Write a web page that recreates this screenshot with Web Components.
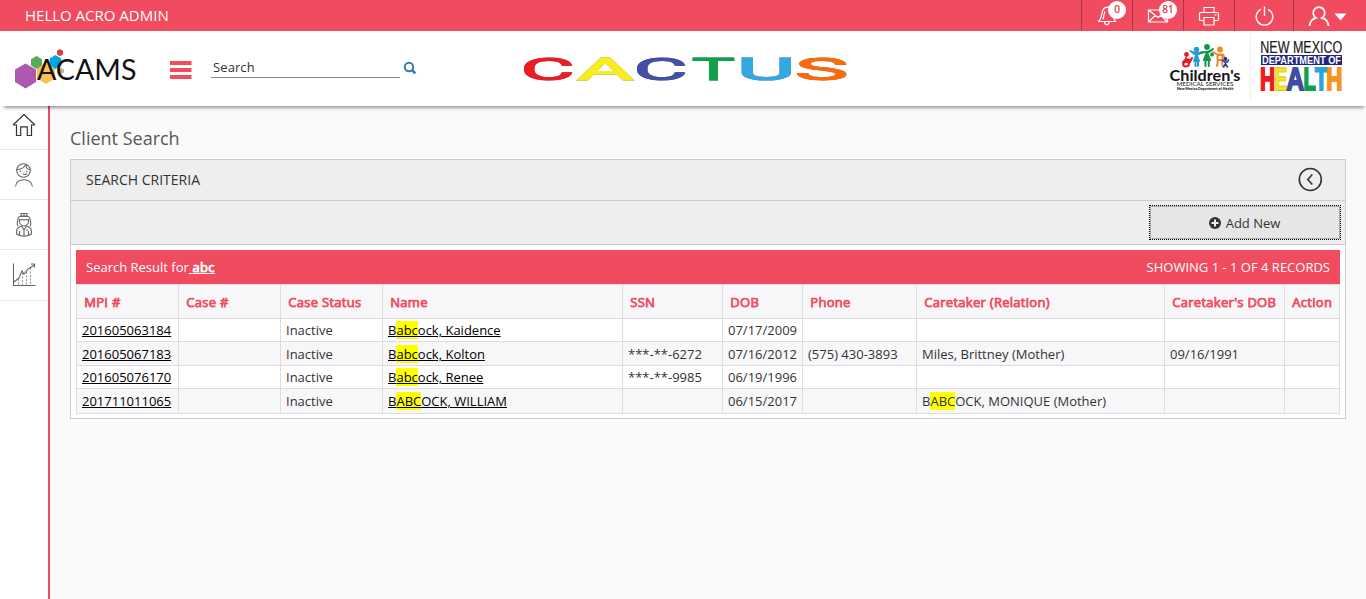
<!DOCTYPE html>
<html lang="en">
<head>
<meta charset="utf-8">
<title>Client Search</title>
<style>
html,body{margin:0;height:100%;overflow:hidden;background:#fafafa;font-family:"Open Sans",sans-serif;font-size:13px;color:#333}
</style>
</head>
<body>
<cactus-app></cactus-app>
<script>
function define(name, html) {
  const t = document.createElement('template');
  t.innerHTML = '<style>*{box-sizing:border-box}svg{display:block;flex:none;overflow:visible}</style>' + html;
  customElements.define(name, class extends HTMLElement {
    constructor() {
      super();
      this.attachShadow({mode: 'open'}).appendChild(t.content.cloneNode(true));
    }
  });
}

define('top-action', `
<style>
:host{display:flex;align-items:center;justify-content:center;box-sizing:border-box;height:31px;width:51px;border-left:1px solid #ae3541;position:relative;color:#fff}
::slotted(svg){display:block;fill:none;stroke:#fff;stroke-width:1.2}
::slotted(b){position:absolute;top:1px;left:26px;width:18px;height:18px;border-radius:9px;background:#fff;color:#e8202c;font:400 10px/17px "Open Sans",sans-serif;text-align:center;-webkit-text-stroke:.2px #e8202c}
</style><slot></slot>`);

define('top-bar', `
<style>
:host{display:flex;height:31px;background:#f14b5f;color:#fff;justify-content:space-between}
.hi{padding-left:25px;font-size:15px;line-height:31px}
nav{display:flex}
.power{width:59px}.user{width:73px}
</style>
<div class="hi">HELLO ACRO ADMIN</div>
<nav>
<top-action><svg width="20" height="22" viewBox="0 1 20 22"><path d="M1 17.500C5 15.500 4 10 6 6 7 3.800 9 2.800 11.500 3.200 16 4 14.500 12 18.500 17.500ZM7.500 17.800C7.800 21.800 11.800 21.800 12.200 17.800M8 7.500C6.800 10 7 12.500 6 15.200"/></svg><b>0</b></top-action>
<top-action><svg width="22" height="22" viewBox="0 0 22 22"><path d="M1.500 5h19v12h-19ZM1.500 5 11 12.500 20.500 5M1.500 17 8.200 10.300M20.500 17 13.800 10.300"/></svg><b>81</b></top-action>
<top-action><svg width="22" height="22" viewBox="0 0 22 22"><path d="M6 7.500v-5h10v5M6 15.500h-3.500q-1 0-1-1v-6q0-1 1-1h17q1 0 1 1v6q0 1-1 1h-3.500M6 12.500h10v7.500h-10ZM16.500 9.800h2"/></svg></top-action>
<top-action class="power"><svg style="stroke-width:1.400" width="20" height="22" viewBox="0 0 20 22"><path d="M7 4.300A8.300 8.300 0 1 0 14 4.300M10.500 1.500v9.500"/></svg></top-action>
<top-action class="user"><svg style="stroke-width:1.700" width="40" height="22" viewBox="2 0 40 22"><path d="M1.500 21C2 16.500 5 13.500 8 12.800A5.800 5.800 0 1 1 14 12.800C17 13.500 20 16.500 20.500 21"/><path d="M26.500 8.500h12l-6 7Z" fill="#fff" stroke="none"/></svg></top-action>
</nav>`);

define('acams-logo', `
<style>:host{display:block}</style>
<svg width="122" height="44" viewBox="14 47 122 44">
<path fill="#fbbf52" d="m46 63 9 5v10.500l-9 5.500-9-5.500V68Z"/>
<path fill="#ad59ae" d="m25.500 63.500 10.500 6v12.500l-10.500 6.500L15 82V69.500Z"/>
<path fill="#58ab59" d="m36.500 56 5.500 3.200v6.300L36.500 69 31 65.500v-6.300Z"/>
<path fill="#04a4e6" d="m55.500 55 5.800 3.400v6.800L55.500 69l-5.800-3.800v-6.800Z"/>
<path fill="#d7433f" d="m60 49 3 1.800v3.600L60 56.200l-3-1.800v-3.600Z"/>
<path fill="#c8b36c" d="m61.500 68 2.500 1.500v3L61.500 74 59 72.500v-3Z"/>
<text x="37" y="80.300" font-family="Lato,sans-serif" font-size="28.500" fill="#111" textLength="99.500" lengthAdjust="spacingAndGlyphs">ACAMS</text>
</svg>`);

define('cactus-logo', `
<style>:host{display:block}text{font-family:Roboto,sans-serif;font-weight:400;font-size:30.500px;stroke-width:1px;stroke-linejoin:miter}svg{filter:drop-shadow(0 0 .6px #777)}</style>
<svg width="330" height="50" viewBox="522 42 330 50">
<text transform="matrix(2.720 0 0 1 520.500 80)" fill="#ed1c24" stroke="#ed1c24">C</text>
<text transform="matrix(2.850 0 0 1 577 80)" fill="#f9ec1f" stroke="#f9ec1f">A</text>
<text transform="matrix(2.720 0 0 1 633.500 80)" fill="#4450a5" stroke="#4450a5">C</text>
<text transform="matrix(2.350 0 0 1 692 80)" fill="#12a04b" stroke="#12a04b">T</text>
<text transform="matrix(2.950 0 0 1 737 80)" fill="#35a8e0" stroke="#35a8e0">U</text>
<text transform="matrix(2.950 0 0 1 795 80)" fill="#fd6a0a" stroke="#fd6a0a">S</text>
</svg>`);

define('children-logo', `
<style>:host{display:block}.p{fill:none;stroke-width:2;stroke-linecap:round;stroke-linejoin:round}</style>
<svg width="74" height="52" viewBox="1168 43 74 52">
<g class="p">
<g stroke="#e51b23"><circle cx="1186.500" cy="54.500" r="1.400" fill="#e51b23"/><path d="M1186 58v4h4l2-4M1186 59l4 1M1185 60l-1 3"/><circle cx="1186" cy="63.500" r="3"/></g>
<g stroke="#219edb"><circle cx="1196.500" cy="49.500" r="1.700" fill="#219edb"/><path d="m1190.500 51 4 3h4l4-2M1196.500 54l-2.500 7h5ZM1195.500 61v5M1198 61v5" fill="#219edb"/></g>
<g stroke="#159548"><circle cx="1207" cy="47" r="1.900" fill="#159548"/><path d="m1200.500 53 4.500-1h4l4-3M1207 52l-3 8h6ZM1205.500 60v6M1208.800 60v6" fill="#159548"/><circle cx="1212" cy="54.500" r="1"/></g>
<g stroke="#f1872d"><circle cx="1220" cy="49.500" r="1.900" fill="#f1872d"/><path d="m1213 52 4 2.500h6l2 4M1217.500 55h5v5h-5ZM1218 60l-1 6M1222 60l.5 6"/></g>
<g stroke="#2e328f" stroke-width="1.500"><circle cx="1225.500" cy="59" r="1.200" fill="#2e328f"/><path d="m1222.500 60 2 2h3l1-2M1225.500 62v2l-2 3M1225.500 64l2 3"/></g>
</g>
<g font-family="Lato,sans-serif" fill="#151515">
<text x="1169.500" y="80.500" font-size="16" font-weight="700" textLength="71" lengthAdjust="spacingAndGlyphs">Children's</text>
<text x="1176.500" y="86.300" font-size="6.400" textLength="57" lengthAdjust="spacingAndGlyphs">MEDICAL SERVICES</text>
<text x="1177" y="90" font-size="3.800" font-weight="900" textLength="56.500" lengthAdjust="spacingAndGlyphs">New Mexico Department of Health</text>
</g></svg>`);

define('health-logo', `
<style>:host{display:block}text{font-family:"Liberation Sans",sans-serif}.h{font-size:32px;font-weight:700;stroke-width:2px}</style>
<svg width="84" height="62" viewBox="1260 37 84 62">
<text x="1260.300" y="52.500" font-size="16.300" fill="#1a1a1a" stroke="#1a1a1a" stroke-width=".2" textLength="82" lengthAdjust="spacingAndGlyphs">NEW MEXICO</text>
<path fill="#22257f" d="M1261 55h81v10h-81Z"/>
<text x="1262" y="63.800" font-size="10.300" font-weight="700" fill="#fff" textLength="79" lengthAdjust="spacingAndGlyphs">DEPARTMENT OF</text>
<g class="h">
<text transform="matrix(.65 0 0 1 1260 90)" fill="#ed1c24" stroke="#ed1c24">H</text>
<text transform="matrix(.60 0 0 1 1274.500 90)" fill="#fdee21" stroke="#e6d52a">E</text>
<text transform="matrix(.76 0 0 1 1286.500 90)" fill="#3e4ea3" stroke="#3e4ea3">A</text>
<text transform="matrix(.63 0 0 1 1303.500 90)" fill="#109f4b" stroke="#109f4b">L</text>
<text transform="matrix(.64 0 0 1 1315 90)" fill="#2aa3dd" stroke="#2aa3dd">T</text>
<text transform="matrix(.70 0 0 1 1326.300 90)" fill="#f7941d" stroke="#f7941d">H</text>
</g></svg>`);

define('site-header', `
<style>
:host{display:grid;grid-template-columns:170px 41px 311px 648px 80px 1fr;height:75px;background:#fff;box-shadow:1px 5px 3px -3px rgba(0,0,0,.38);position:relative;z-index:1}
.a{padding:16px 0 0 14px}.burger{padding-top:30px}
.search{display:flex;padding-top:25px;align-items:flex-start}
.field{width:189px;height:22px;border-bottom:1px solid #888;padding-left:2px;line-height:22px;letter-spacing:.1px}
.search svg{margin:6px 0 0 4px}.c{padding-top:11px}.k{padding-top:12px;margin-left:-2px}
.h{border-left:1px solid #eee;height:68px;margin-top:2px;padding:4px 0 0 9px}
</style>
<acams-logo class="a"></acams-logo>
<div class="burger"><svg width="22" height="19" fill="#f14b5f"><path d="M0 0h21.500v4H0ZM0 7h21.500v4H0ZM0 14h21.500v4H0Z"/></svg></div>
<div class="search"><div class="field">Search</div><svg width="14" height="14" viewBox="0 0 14 14" fill="none" stroke="#337ab7"><circle cx="5" cy="5" r="4.200" stroke-width="2"/><path d="m8 8 3.300 3.300" stroke-width="2.500"/></svg></div>
<cactus-logo class="c"></cactus-logo>
<children-logo class="k"></children-logo>
<div class="h"><health-logo></health-logo></div>`);

define('side-nav', `
<style>
:host{display:block;width:50px;box-sizing:border-box;background:#fff;border-right:2px solid #f14b5f}
div{height:50px;border-bottom:1px solid #e7e7e7;display:flex;align-items:center;justify-content:center}
.first{height:44px;padding-bottom:6px}.last{height:51px}
svg{fill:none;stroke:#666;stroke-width:1.100}
.first svg{stroke:#333;stroke-width:1.200}
</style>
<div class="first"><svg width="24" height="24" viewBox="0 0 24 24"><path d="M1 12 12 1.500 23 12M1 12h3.500v10.500h4.200v-8.700h6.600v8.700h4.200V12H23"/></svg></div>
<div><svg width="24" height="26" viewBox="0 0 24 26"><circle cx="11.500" cy="8.500" r="6.800"/><path d="M4.500 7.500C9 7.500 12 6 13.500 3M14.500 2.500C13.500 5 15 7.500 18 7.500M3.500 24.500C4 19.500 7 17.700 12 17.700s7.500 2 8.500 6.800M7.500 9.200h1.500M14 9.200h1.500M11 11.700q2 1.500 4 0"/></svg></div>
<div><svg width="22" height="26" viewBox="0 0 22 26"><path d="M8 4V1.500h6V4M7 4.500h8M11 1.500v3M5 14C3 12 5 8 5 6.500 6 2.800 16 2.800 17 6.500 17 8 19 12 17 14M6.500 7.500C10 8 13 8 15.500 7.500V10Q15 13 11 14 7 13 6.500 10ZM8.500 14C3 15.500 3.500 19 3.500 22q7.500 4.500 15 0C18.500 19 19 15.500 13.500 14M8.500 14l2.500 4 2.500-4M11 18v6M6.500 19v4M15.500 19v4M13 18h2"/></svg></div>
<div class="last"><svg width="24" height="26" viewBox="0 0 24 26"><path d="M1.500 1.500v22H23.500M2 20l5-4 3-7 2 3 4-5 6.500-4M19 2H22.500v3.500"/><path stroke-dasharray="2 1.500" stroke="#999" d="M6.500 17v6M10.500 11v12M14.500 10v13M18.500 6v17"/></svg></div>`);

define('panel-card', `
<style>
:host{display:block;border:1px solid #ccc;background:#fff;height:260px;box-sizing:border-box}
.head{height:41px;background:#eee;border-bottom:1px solid #ccc;padding:0 23px 1px 15px;display:flex;align-items:center;justify-content:space-between;font-size:14px}
.tools{height:44px;background:#eee;border-bottom:1px solid #ccc;display:flex;justify-content:flex-end;padding:5px 5px 0}
.body{padding:5px}
.btn{width:190px;height:33px;border:1px solid #acacac;outline:1px dotted #000;background:#e6e6e6;display:flex;align-items:center;justify-content:center;gap:5px;line-height:18px;padding-right:1px}
</style>
<div class="head"><span>SEARCH CRITERIA</span><svg width="24" height="24" fill="none" stroke="#333" stroke-width="1.600"><circle cx="12.300" cy="11.500" r="11"/><path d="m14.300 6.500-4.500 5 4.500 5"/></svg></div>
<div class="tools"><div class="btn"><svg width="12" height="12"><circle cx="6" cy="6" r="6" fill="#333"/><path d="M2.500 6h7M6 2.500v7" stroke="#eee" stroke-width="2"/></svg><span>Add New</span></div></div>
<div class="body"><slot></slot></div>`);

define('result-table', `
<style>
:host{display:block}
.bar{height:34px;background:#f14b5f;color:#fff;display:flex;justify-content:space-between;padding:0 10px;line-height:34px}
.bar u{-webkit-text-stroke:.75px #fff;letter-spacing:.3px}
.r{display:grid;grid-template-columns:102px 102px 102px 240px 100px 80px 114px 248px 120px 56px;height:23px;line-height:22px;white-space:pre}
.r:nth-child(odd){height:24px;background:#f7f7f9;line-height:24px}
.r>div{border-left:1px solid #ddd;border-top:1px solid #ddd;padding-left:5px}
.r>div:last-child{border-right:1px solid #ddd}
.r:last-child{height:25px}.r:last-child>div{border-bottom:1px solid #ddd}
.r.h{height:34px;line-height:34px;background:#f7f7f9;color:#f14b5f;-webkit-text-stroke:.75px #f14b5f;letter-spacing:.28px}
.r.h>div{padding-left:7.300px}
a{color:#000;text-decoration:underline}
mark{background:#ff0;color:inherit}
</style>
<div class="bar"><span>Search Result for<u> abc</u></span><span>SHOWING 1 - 1 OF 4 RECORDS</span></div>
<div class="t"><div class="r h"><div>MPI #</div><div>Case #</div><div>Case Status</div><div>Name</div><div>SSN</div><div>DOB</div><div>Phone</div><div>Caretaker (Relation)</div><div>Caretaker's DOB</div><div>Action</div></div><div class="r"><div><a>201605063184</a></div><div></div><div>Inactive</div><div><a>B<mark>abc</mark>ock, Kaidence</a></div><div></div><div>07/17/2009</div><div></div><div></div><div></div><div></div></div><div class="r"><div><a>201605067183</a></div><div></div><div>Inactive</div><div><a>B<mark>abc</mark>ock, Kolton</a></div><div>***-**-6272</div><div>07/16/2012</div><div>(575) 430-3893</div><div>Miles, Brittney (Mother)</div><div>09/16/1991</div><div></div></div><div class="r"><div><a>201605076170</a></div><div></div><div>Inactive</div><div><a>B<mark>abc</mark>ock, Renee</a></div><div>***-**-9985</div><div>06/19/1996</div><div></div><div></div><div></div><div></div></div><div class="r"><div><a>201711011065</a></div><div></div><div>Inactive</div><div><a>B<mark>ABC</mark>OCK, WILLIAM</a></div><div></div><div>06/15/2017</div><div></div><div>B<mark>ABC</mark>OCK, MONIQUE (Mother)</div><div></div><div></div></div></div>`);

define('cactus-app', `
<style>
:host{display:flex;flex-direction:column;height:599px;width:1366px}
.row{display:flex;flex:1}
main{flex:1;padding:18px 20px 0}
h1{margin:0 0 7px;font-size:18px;font-weight:400;line-height:28px;color:#55585c}
</style>
<top-bar></top-bar><site-header></site-header>
<div class="row"><side-nav></side-nav><main><h1>Client Search</h1><panel-card><result-table></result-table></panel-card></main></div>`);
</script>
</body>
</html>
